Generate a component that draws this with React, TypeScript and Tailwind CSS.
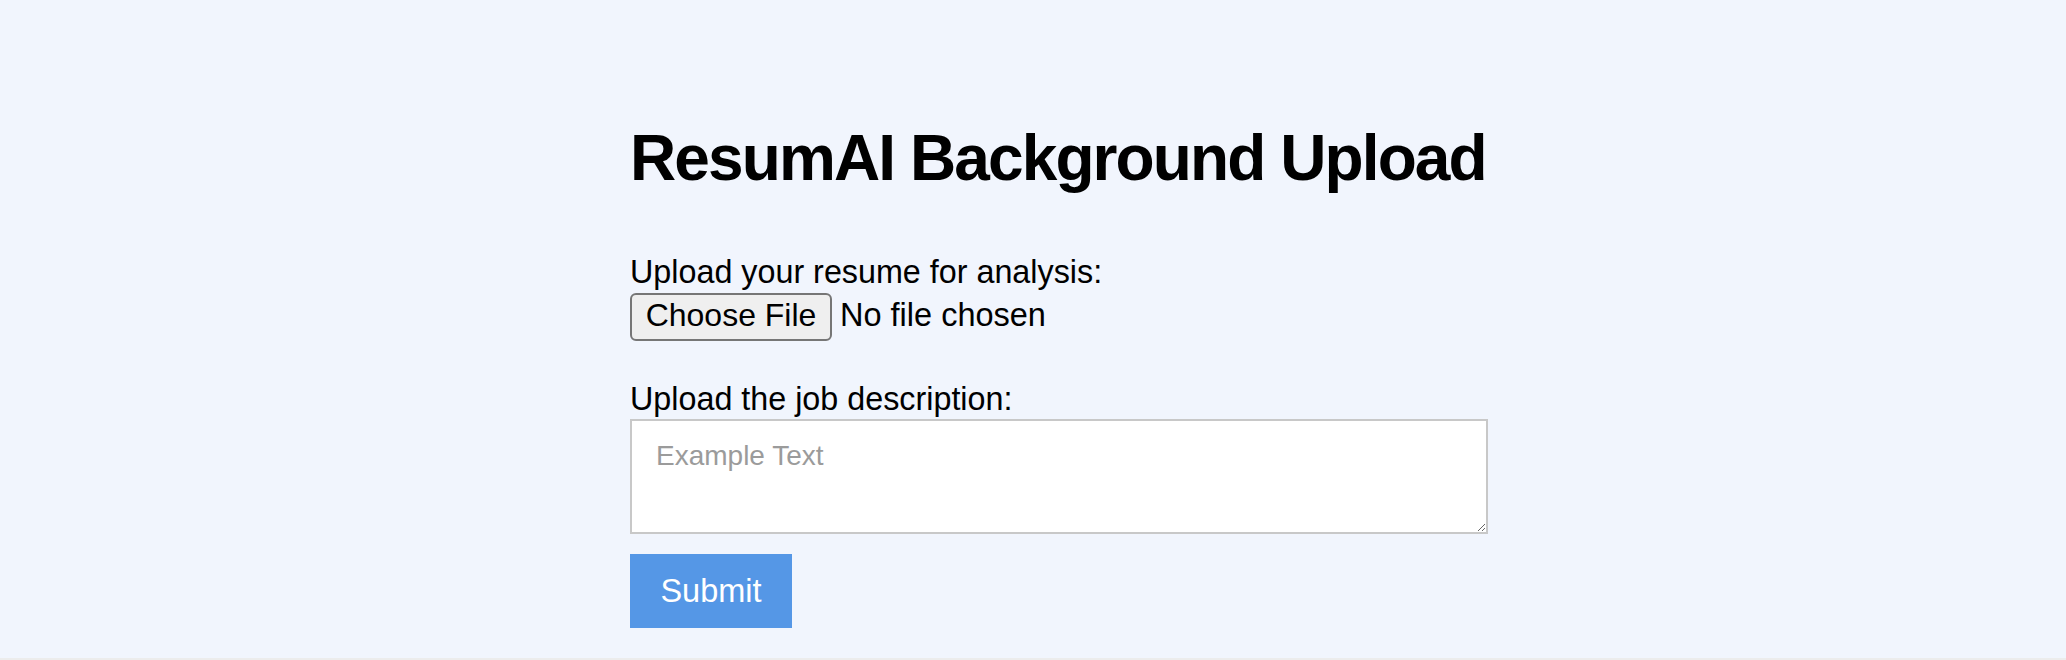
import React from "react";

export default function App() {
  return (
    <div className="h-[660px] w-full bg-[#ececec]" style={{ fontFamily: '"Liberation Sans", Arial, sans-serif' }}>
      <div className="flex h-[658px] w-full flex-col bg-[#f1f5fd] pl-[630px] pt-[121px] text-black">
        <h1 className="h-[74px] text-[64px] font-bold leading-[74px] tracking-[-1.9px]">
          ResumAI Background Upload
        </h1>
        <form className="flex w-[858px] flex-col" onSubmit={(e) => e.preventDefault()}>
          <label htmlFor="resume" className="mt-[59px] h-[36px] text-[32.3px] leading-[36px]">
            Upload your resume for analysis:
          </label>
          <div className="mt-[2.5px] flex items-center">
            <label className="flex h-[48px] w-[202px] cursor-pointer items-center justify-center rounded-[6px] border-2 border-[#767676] bg-[#efefef] pb-[3px] text-[32px] leading-[36px] text-black">
              Choose File
              <input id="resume" type="file" className="hidden" />
            </label>
            <span className="ml-[8px] pb-[3px] text-[32.5px] leading-[36px]">No file chosen</span>
          </div>
          <label htmlFor="job" className="mt-[40.5px] h-[36px] text-[32.3px] leading-[36px]">
            Upload the job description:
          </label>
          <textarea
            id="job"
            placeholder="Example Text"
            className="mt-[2px] h-[114.5px] w-[858px] border-2 border-[#c8c8c8] bg-white px-[24px] pt-[19px] text-[28px] leading-[32px] text-black outline-none placeholder:text-[#9b9b9b]"
            style={{ fontFamily: '"Liberation Sans", Arial, sans-serif' }}
          />
          <div className="mt-[20.5px] flex">
            <button
              type="submit"
              className="h-[74px] w-[162px] bg-[#5597e6] text-[32.5px] leading-[36px] text-white"
            >
              Submit
            </button>
          </div>
        </form>
      </div>
    </div>
  );
}
